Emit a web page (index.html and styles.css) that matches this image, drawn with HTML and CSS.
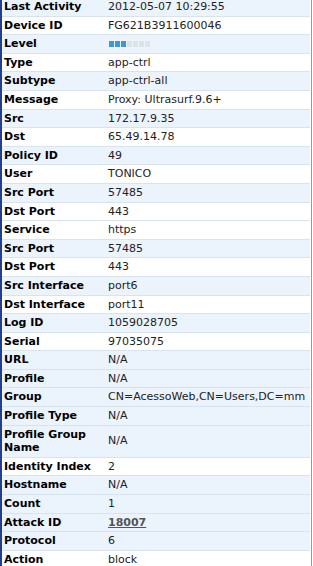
FILE: index.html
```html
<!DOCTYPE html>
<html>
<head>
<meta charset="utf-8">
<link rel="stylesheet" href="styles.css">
</head>
<body>
<div class="panel">
<table class="details">
<tr><th>Last Activity</th><td>2012-05-07 10:29:55</td></tr>
<tr class="alt"><th>Device ID</th><td>FG621B3911600046</td></tr>
<tr><th>Level</th><td><span class="level"><i class="on"></i><i class="on"></i><i class="on"></i><i></i><i></i><i></i><i></i></span></td></tr>
<tr class="alt"><th>Type</th><td>app-ctrl</td></tr>
<tr><th>Subtype</th><td>app-ctrl-all</td></tr>
<tr class="alt"><th>Message</th><td>Proxy: Ultrasurf.9.6+</td></tr>
<tr><th>Src</th><td>172.17.9.35</td></tr>
<tr class="alt"><th>Dst</th><td>65.49.14.78</td></tr>
<tr><th>Policy ID</th><td>49</td></tr>
<tr class="alt"><th>User</th><td>TONICO</td></tr>
<tr><th>Src Port</th><td>57485</td></tr>
<tr class="alt"><th>Dst Port</th><td>443</td></tr>
<tr class="alt"><th>Service</th><td>https</td></tr>
<tr><th>Src Port</th><td>57485</td></tr>
<tr class="alt"><th>Dst Port</th><td>443</td></tr>
<tr><th>Src Interface</th><td>port6</td></tr>
<tr class="alt"><th>Dst Interface</th><td>port11</td></tr>
<tr><th>Log ID</th><td>1059028705</td></tr>
<tr class="alt"><th>Serial</th><td>97035075</td></tr>
<tr><th>URL</th><td>N/A</td></tr>
<tr><th>Profile</th><td>N/A</td></tr>
<tr><th>Group</th><td class="clip">CN=AcessoWeb,CN=Users,DC=mm</td></tr>
<tr><th>Profile Type</th><td>N/A</td></tr>
<tr><th>Profile Group Name</th><td>N/A</td></tr>
<tr class="alt"><th>Identity Index</th><td>2</td></tr>
<tr><th>Hostname</th><td>N/A</td></tr>
<tr><th>Count</th><td>1</td></tr>
<tr><th>Attack ID</th><td><a class="link" href="#">18007</a></td></tr>
<tr><th>Protocol</th><td>6</td></tr>
<tr class="alt"><th>Action</th><td>block</td></tr>
<tr><th>&nbsp;</th><td>&nbsp;</td></tr>
</table>
</div>
</body>
</html>
```
FILE: styles.css
```css
html, body {
  margin: 0;
  padding: 0;
  background: #ffffff;
  overflow: hidden;
}
body {
  font-family: "DejaVu Sans", Verdana, sans-serif;
  font-size: 11px;
  color: #222;
}
.panel {
  width: 308px;
  margin-top: -2px;
  border-left: 2px solid #23408e;
  border-right: 1px solid #9a9a9a;
  padding-right: 1px;
}
.details {
  width: 100%;
  border-collapse: collapse;
  table-layout: fixed;
}
.details tr {
  background: #ebf3fd;
  border-bottom: 1px solid #d8e3f0;
}
.details tr.alt {
  background: #ffffff;
}
.details th {
  width: 99px;
  text-align: left;
  font-weight: bold;
  color: #000;
  padding: 2px 2px 2px 2px;
  line-height: 13.6px;
  vertical-align: middle;
}
.details td {
  padding: 2px 2px 2px 3px;
  line-height: 13.6px;
  vertical-align: middle;
  white-space: nowrap;
  overflow: hidden;
}
.level {
  display: inline-flex;
  gap: 1px;
  padding: 1px;
  background: #f0f3f6;
  border-radius: 2px;
  vertical-align: middle;
}
.level i {
  display: block;
  width: 5px;
  height: 6px;
  background: #dde3ea;
}
.level i.on {
  background: #3a9ad9;
}
.link {
  color: #555;
  font-weight: bold;
  text-decoration: underline;
}
```
